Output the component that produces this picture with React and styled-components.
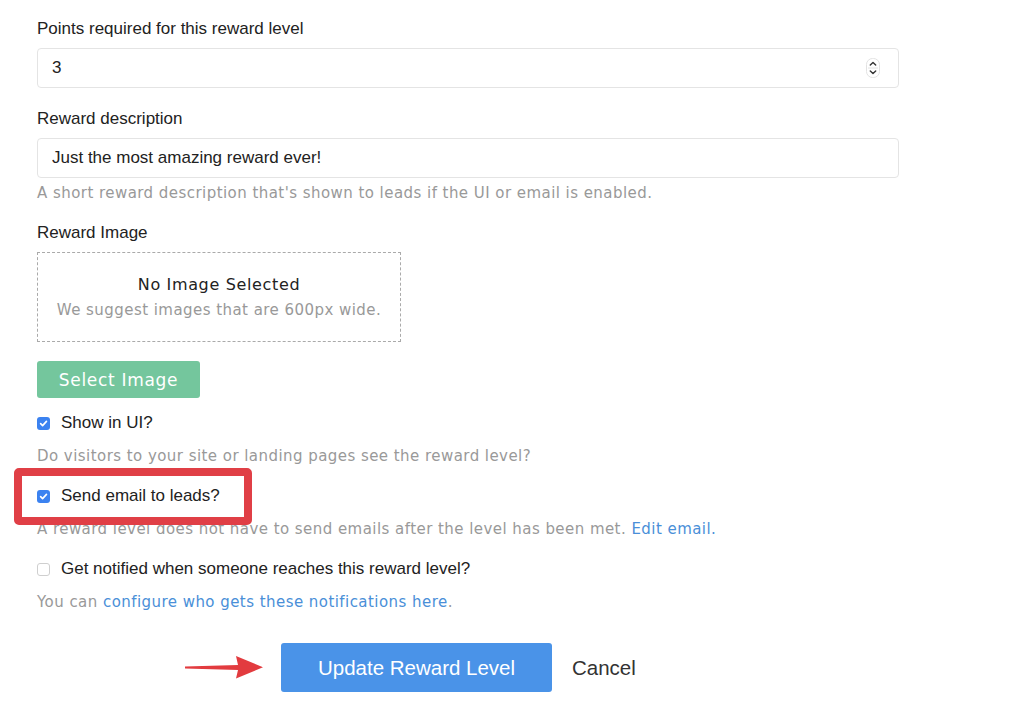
import React, { useState } from 'react';
import styled, { createGlobalStyle } from 'styled-components';

const GlobalStyle = createGlobalStyle`
	body {
		margin: 0;
		background: #fff;
		font-family: 'Liberation Sans', Arial, sans-serif;
		color: #222;
	}
`;

const CheckIcon = () => (
	<svg width='9' height='9' viewBox='0 0 10 10'>
		<path
			d='M1.8 5.2 L4 7.4 L8.3 2.6'
			fill='none'
			stroke='#fff'
			strokeWidth='1.8'
			strokeLinecap='round'
			strokeLinejoin='round'
		/>
	</svg>
);

const SpinnerIcon = () => (
	<svg width='14' height='20' viewBox='0 0 14 20'>
		<rect x='0.5' y='0.5' width='13' height='19' rx='6' fill='#fff' stroke='#e2e2e2' />
		<line x1='2' y1='10' x2='12' y2='10' stroke='#e2e2e2' />
		<path d='M4.3 7 L7 4.4 L9.7 7' fill='none' stroke='#333' strokeWidth='1.4' strokeLinecap='round' strokeLinejoin='round' />
		<path d='M4.3 13 L7 15.6 L9.7 13' fill='none' stroke='#333' strokeWidth='1.4' strokeLinecap='round' strokeLinejoin='round' />
	</svg>
);

const ArrowIcon = () => (
	<svg width='78' height='24' viewBox='0 0 78 24'>
		<path d='M0 11.4 L53 10 L51 1 L78 12.3 L51 23.5 L53 15 L0 13.6 Z' fill='#e23b3f' />
	</svg>
);

const Checkbox = ({ checked }) => (
	<Box checked={checked}>{checked && <CheckIcon />}</Box>
);

const RewardForm = () => {
	const [points, setPoints] = useState('3');
	const [desc, setDesc] = useState('Just the most amazing reward ever!');

	return (
		<Page>
			<Label>Points required for this reward level</Label>
			<InputBox>
				<Input value={points} onChange={(e) => setPoints(e.target.value)} />
				<SpinnerIcon />
			</InputBox>

			<Label $top={21}>Reward description</Label>
			<InputBox>
				<Input value={desc} onChange={(e) => setDesc(e.target.value)} />
			</InputBox>
			<Help>
				A short reward description that's shown to leads if the UI or email is enabled.
			</Help>

			<Label $top={20}>Reward Image</Label>
			<DropZone>
				<DropTitle>No Image Selected</DropTitle>
				<DropHint>We suggest images that are 600px wide.</DropHint>
			</DropZone>
			<SelectButton type='button'>Select Image</SelectButton>

			<CheckField $top={15}>
				<CheckRow>
					<Checkbox checked />
					<span>Show in UI?</span>
				</CheckRow>
				<Help $top={13}>Do visitors to your site or landing pages see the reward level?</Help>
			</CheckField>

			<CheckField $top={20}>
				<CheckRow>
					<Highlight />
					<Checkbox checked />
					<span>Send email to leads?</span>
				</CheckRow>
				<Help $top={13}>
					A reward level does not have to send emails after the level has been met.{' '}
					<Link href='#'>Edit email.</Link>
				</Help>
			</CheckField>

			<CheckField $top={20}>
				<CheckRow>
					<Checkbox />
					<span>Get notified when someone reaches this reward level?</span>
				</CheckRow>
				<Help $top={13}>
					You can <Link href='#'>configure who gets these notifications here</Link>.
				</Help>
			</CheckField>

			<Actions>
				<Pointer>
					<ArrowIcon />
				</Pointer>
				<PrimaryButton type='button'>Update Reward Level</PrimaryButton>
				<CancelLink href='#'>Cancel</CancelLink>
			</Actions>
		</Page>
	);
};

const Page = styled.div`
	padding: 19px 0 0 37px;
	width: 862px;
`;

const Label = styled.div`
	font-size: 17px;
	line-height: 20px;
	color: #222;
	margin-top: ${(p) => p.$top || 0}px;
	margin-bottom: 9px;
`;

const InputBox = styled.div`
	display: flex;
	align-items: center;
	height: 40px;
	box-sizing: border-box;
	border: 1px solid #e4e4e4;
	border-radius: 4px;
	padding: 0 18px 0 14px;
`;

const Input = styled.input`
	flex: 1;
	border: none;
	outline: none;
	padding: 0;
	font-family: 'Liberation Sans', Arial, sans-serif;
	font-size: 17px;
	color: #222;
	background: transparent;
`;

const Help = styled.div`
	margin-top: ${(p) => p.$top || 5}px;
	font-family: 'DejaVu Sans', Verdana, sans-serif;
	font-size: 15px;
	line-height: 20px;
	color: #999;
	letter-spacing: 0.45px;
`;

const Link = styled.a`
	color: #4a8fd8;
	text-decoration: none;
`;

const DropZone = styled.div`
	width: 364px;
	height: 90px;
	box-sizing: border-box;
	border: 1px dashed #aaa;
	display: flex;
	flex-direction: column;
	align-items: center;
	justify-content: center;
	gap: 5px;
	font-family: 'DejaVu Sans', Verdana, sans-serif;
`;

const DropTitle = styled.div`
	font-size: 16px;
	line-height: 20px;
	color: #222;
	letter-spacing: 0.65px;
`;

const DropHint = styled.div`
	font-size: 15px;
	line-height: 20px;
	color: #999;
	letter-spacing: 0.45px;
`;

const SelectButton = styled.button`
	display: block;
	margin-top: 19px;
	width: 163px;
	height: 37px;
	border: none;
	border-radius: 3px;
	background: #74c69d;
	color: #fff;
	font-family: 'DejaVu Sans', Verdana, sans-serif;
	font-size: 17px;
	letter-spacing: 0.7px;
	padding-top: 2px;
	cursor: pointer;
`;

const CheckField = styled.div`
	margin-top: ${(p) => p.$top}px;
`;

const CheckRow = styled.label`
	position: relative;
	display: flex;
	align-items: center;
	gap: 11px;
	font-size: 17px;
	line-height: 20px;
	color: #222;
`;

const Box = styled.span`
	width: 13px;
	height: 13px;
	box-sizing: border-box;
	border-radius: 3px;
	display: flex;
	align-items: center;
	justify-content: center;
	background: ${(p) => (p.checked ? '#3b82f0' : '#fff')};
	border: ${(p) => (p.checked ? 'none' : '1px solid #cfcfcf')};
`;

const Highlight = styled.span`
	position: absolute;
	left: -23px;
	top: -18px;
	width: 238px;
	height: 57px;
	box-sizing: border-box;
	border: 8px solid #e03f46;
	border-radius: 5px;
	pointer-events: none;
`;

const Actions = styled.div`
	position: relative;
	display: flex;
	align-items: center;
	gap: 20px;
	margin: 31px 0 0 244px;
`;

const Pointer = styled.div`
	position: absolute;
	left: -96px;
	top: 12px;
	display: flex;
`;

const PrimaryButton = styled.button`
	width: 271px;
	height: 49px;
	border: none;
	border-radius: 3px;
	background: #4a93e8;
	color: #fff;
	font-family: 'Liberation Sans', Arial, sans-serif;
	font-size: 20.5px;
	cursor: pointer;
`;

const CancelLink = styled.a`
	font-size: 20.5px;
	color: #333;
	text-decoration: none;
`;

export default function App() {
	return (
		<>
			<GlobalStyle />
			<RewardForm />
		</>
	);
}
